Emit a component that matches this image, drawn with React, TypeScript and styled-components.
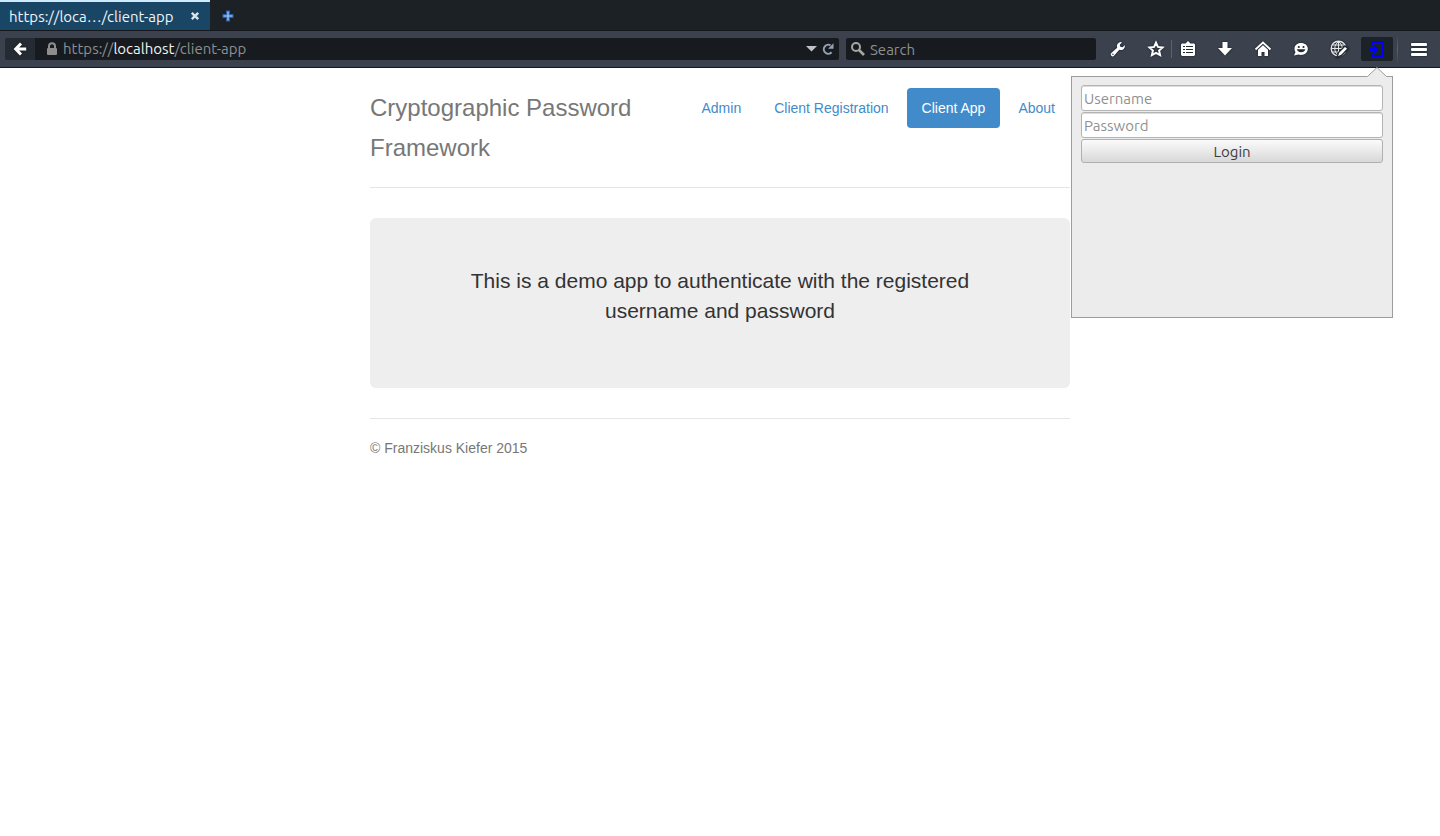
import React from "react";
import styled, { createGlobalStyle, css } from "styled-components";

const uiFont = `Ubuntu, "Noto Sans", "Open Sans", sans-serif`;
const pageFont = `"Liberation Sans", Arial, sans-serif`;

const GlobalStyle = createGlobalStyle`
  *, *::before, *::after { box-sizing: border-box; }
  body { margin: 0; background: #fff; font-family: ${pageFont}; }
  button, input { font: inherit; }
`;

/* ---------- browser chrome ---------- */

const Chrome = styled.header`
  font-family: ${uiFont};
  font-size: 15px;
`;

const TabBar = styled.div`
  display: flex;
  height: 31px;
  background: #1c2126;
  border-bottom: 1px solid #14181d;
`;

const Tab = styled.div`
  display: flex;
  align-items: center;
  justify-content: space-between;
  width: 210px;
  padding: 0 9px;
  border-top: 2px solid #cdeaff;
  background: #1a4666;
  color: #f0f4f7;
`;

const PlainButton = styled.button`
  display: flex;
  align-items: center;
  justify-content: center;
  padding: 0;
  border: 0;
  background: none;
  cursor: pointer;
`;

const TabClose = styled(PlainButton)`
  width: 12px;
  height: 12px;
`;

const NewTab = styled(PlainButton)`
  width: 36px;
  padding-top: 2px;
`;

const NavBar = styled.div`
  display: flex;
  align-items: center;
  height: 37px;
  padding-left: 5px;
  background: #3b424e;
  border-bottom: 1px solid #14181d;
`;

const BackButton = styled(PlainButton)`
  width: 30px;
  height: 22px;
  border-radius: 2px 0 0 2px;
  background: #252b33;
`;

const field = css`
  display: flex;
  align-items: center;
  height: 22px;
  background: #171b1f;
  color: #8d8f91;
`;

const AddressField = styled.div`
  ${field}
  flex: 1;
  min-width: 0;
  padding: 0 5px 0 11px;
  gap: 5px;
  border-radius: 0 2px 2px 0;
`;

const Address = styled.div`
  flex: 1;
  min-width: 0;
  overflow: hidden;
  white-space: nowrap;
  line-height: 22px;
  outline: 0;
`;

const Host = styled.span`
  color: #f3f3f0;
`;

const SearchField = styled.div`
  ${field}
  width: 250px;
  margin: 0 6px 0 7px;
  padding: 0 4px;
  gap: 4px;
  border-radius: 2px;
`;

const SearchInput = styled.input`
  flex: 1;
  min-width: 0;
  height: 22px;
  padding: 0;
  border: 0;
  outline: 0;
  background: none;
  color: #f3f3f0;
  &::placeholder { color: #8d8f91; opacity: 1; }
`;

const Tools = styled.div`
  display: flex;
  align-items: center;
  gap: 6px;
`;

const ToolPair = styled.div`
  display: flex;
  align-items: center;
`;

const ToolButton = styled(PlainButton)<{ $width?: number; $active?: boolean }>`
  width: ${(p) => p.$width ?? 32}px;
  height: 24px;
  border-radius: 2px;
  background: ${(p) => (p.$active ? "#1b2228" : "none")};
`;

const Separator = styled.span<{ $tall?: boolean }>`
  width: 1px;
  height: ${(p) => (p.$tall ? 30 : 18)}px;
  margin-left: ${(p) => (p.$tall ? 4 : 0)}px;
  background: ${(p) =>
    p.$tall ? "linear-gradient(transparent, #5d636e, transparent)" : "#5d636e"};
`;

/* ---------- login panel ---------- */

const PanelAnchor = styled.div`
  position: relative;
`;

const Panel = styled.form`
  position: absolute;
  z-index: 1;
  top: 39px;
  right: 0;
  display: flex;
  flex-direction: column;
  gap: 1px;
  width: 322px;
  height: 242px;
  padding: 8px 9px;
  border: 1px solid #9c9c9c;
  background: #ececec;
`;

const PanelArrow = styled.svg`
  position: absolute;
  top: -10px;
  right: 5px;
`;

const PanelInput = styled.input`
  width: 100%;
  height: 26px;
  padding: 1px 2px 0;
  border: 1px solid #b4b4b4;
  border-radius: 3px;
  background: #fff;
  box-shadow: inset 0 1px 0 #dcdcdc;
  color: #3c3c3c;
  &::placeholder { color: #8f9090; opacity: 1; }
`;

const LoginButton = styled.button`
  height: 24px;
  padding: 2px 0 0;
  border: 1px solid #b0b0b0;
  border-radius: 3px;
  background: linear-gradient(#fbfbfb, #d8d8d8);
  color: #3c3c3c;
  line-height: 20px;
`;

/* ---------- page ---------- */

const Container = styled.div`
  max-width: 700px;
  margin: 0 auto;
  padding-top: 20px;
  color: #333;
  font-size: 14px;
  line-height: 20px;
`;

const PageHeader = styled.div`
  display: flex;
  align-items: flex-start;
  justify-content: space-between;
  margin-bottom: 30px;
  padding-bottom: 19px;
  border-bottom: 1px solid #e5e5e5;
`;

const Title = styled.h3`
  flex: 1;
  margin: 0;
  color: #777;
  font-size: 24px;
  font-weight: 400;
  line-height: 40px;
`;

const Pills = styled.nav`
  display: flex;
  gap: 3px;
`;

const Pill = styled.a<{ $active?: boolean }>`
  padding: 10px 15px;
  border-radius: 4px;
  background: ${(p) => (p.$active ? "#428bca" : "none")};
  color: ${(p) => (p.$active ? "#fff" : "#428bca")};
  text-decoration: none;
  white-space: nowrap;
`;

const Jumbotron = styled.section`
  margin-bottom: 30px;
  padding: 48px 60px 62px;
  border-radius: 6px;
  background: #eee;
  text-align: center;
`;

const Lead = styled.p`
  margin: 0;
  font-size: 21px;
  line-height: 30px;
`;

const Footer = styled.footer`
  padding-top: 19px;
  border-top: 1px solid #e5e5e5;
  color: #777;
`;

/* ---------- icons ---------- */

const Glyph = styled.svg`
  display: block;
  flex: none;
  overflow: visible;
`;

const Shaded = styled(Glyph)`
  filter: drop-shadow(0 0 1px #14181d);
`;

const BackIcon = () => (
  <Shaded width="14" height="14" viewBox="0 0 14 14" fill="none" stroke="#fff" strokeWidth="3">
    <path d="M8 1.500 2.700 7 8 12.500M3 7h10.200" />
  </Shaded>
);

const CloseIcon = () => (
  <Glyph width="8" height="8" viewBox="0 0 8 8" stroke="#d8e2e8" strokeWidth="2.400">
    <path d="m.8.8 6.400 6.400M7.200.8.8 7.200" />
  </Glyph>
);

const PlusIcon = () => (
  <Glyph width="12" height="12" viewBox="0 0 12 12">
    <path d="M4 .5h4V4h3.500v4H8v3.500H4V8H.5V4H4z" fill="#2e5ea8" />
    <path d="M6 1.500v9M1.500 6h9" stroke="#8db9ef" strokeWidth="1.600" />
  </Glyph>
);

const LockIcon = () => (
  <Glyph width="12" height="14" viewBox="0 0 12 14">
    <path d="M3 6.500V4.200a3 3 0 0 1 6 0v2.300" fill="none" stroke="#8e8e8e" strokeWidth="2" />
    <rect x="1" y="6" width="10" height="7" rx="1" fill="#8e8e8e" />
  </Glyph>
);

const DropIcon = () => (
  <Glyph width="11" height="6" viewBox="0 0 11 6" fill="#c0c3c6">
    <path d="M0 0h11L5.500 5.500z" />
  </Glyph>
);

const ReloadIcon = () => (
  <Glyph width="12" height="12" viewBox="0 0 12 12">
    <path d="M9.600 9.300A4.500 4.500 0 1 1 8.500 2.300" fill="none" stroke="#97a3b3" strokeWidth="2" />
    <path d="M11.500.2v5.600H6z" fill="#97a3b3" />
  </Glyph>
);

const SearchIcon = () => (
  <Glyph width="16" height="16" viewBox="0 0 16 16" fill="none" stroke="#a6a6a4">
    <circle cx="6" cy="6" r="4" strokeWidth="2" />
    <path d="m9 9 5 5" strokeWidth="2.600" />
  </Glyph>
);

const WrenchIcon = () => (
  <Shaded width="16" height="16" viewBox="0 0 16 16">
    <path
      d="M10.600 1a4.200 4.200 0 0 0-3.400 5.700L1.300 12a1.900 1.900 0 0 0 2.700 2.700l5.300-5.900a4.200 4.200 0 0 0 5.600-4.500l-2.400 2-2.200-.6-.5-2 2.200-2.500z"
      fill="#fff"
    />
    <circle cx="2.900" cy="13.200" r=".8" fill="#3b424e" />
  </Shaded>
);

const StarIcon = () => (
  <Shaded width="16" height="16" viewBox="0 0 16 16">
    <path
      d="m8 1.700 1.900 4.200 4.600.5-3.400 3.100 1 4.600L8 11.800l-4.100 2.300 1-4.600L1.500 6.400l4.600-.5z"
      fill="none"
      stroke="#fff"
      strokeWidth="2"
    />
  </Shaded>
);

const ClipboardIcon = () => (
  <Shaded width="16" height="16" viewBox="0 0 16 16">
    <path d="M2 2.500h3.500L8 0l2.500 2.500H14l1 1V14l-1 1H2l-1-1V3.500z" fill="#fff" />
    <path d="M3 5.500h2M6 5.500h7M3 8.500h2M6 8.500h7M3 11.500h2M6 11.500h7" stroke="#252b33" strokeWidth="1" />
  </Shaded>
);

const DownloadIcon = () => (
  <Shaded width="16" height="16" viewBox="0 0 16 16" fill="#fff">
    <path d="M5.500 1h5v6H15l-7 7.500L1 7h4.500z" />
  </Shaded>
);

const HomeIcon = () => (
  <Shaded width="16" height="16" viewBox="0 0 16 16">
    <path d="M.5 8.500 8 1.500l7.500 7" fill="none" stroke="#fff" strokeWidth="1.800" />
    <path d="M3 8.800 8 4.200l5 4.600V15H9.500v-4h-3v4H3z" fill="#fff" />
  </Shaded>
);

const SmileIcon = () => (
  <Shaded width="16" height="16" viewBox="0 0 16 16">
    <path d="M8 2C4 2 1.500 4.500 1.500 7.800c0 1.500.3 2.300 1 3.300L1 14.500l4.200-1c.8.300 1.800.5 2.800.5 4 0 6.800-2.700 6.800-6.200S12 2 8 2z" fill="#fff" />
    <circle cx="5.800" cy="6" r="1.100" fill="#252b33" />
    <circle cx="10.500" cy="6" r="1.100" fill="#252b33" />
    <path d="M3.800 8.300h8.600c-.6 2-2.200 3-4.300 3s-3.700-1-4.300-3z" fill="#252b33" />
  </Shaded>
);

const GlobeIcon = () => (
  <Shaded width="18" height="18" viewBox="0 0 18 18">
    <circle cx="8.500" cy="8.500" r="7.300" fill="#30363f" stroke="#e3e5e7" strokeWidth="1.400" />
    <path
      d="M1.500 8.500h14M2.800 5h11.500M2.800 12h11.500M8.500 1.500v14M8.500 1.500c-5 4-5 10 0 14M8.500 1.500c5 4 5 10 0 14"
      fill="none"
      stroke="#e3e5e7"
      strokeWidth="1"
    />
    <path d="m7 17.500 1.500-5L15 6l3 2.800-6.500 6.700z" fill="#fff" stroke="#252b33" strokeWidth="1.400" />
  </Shaded>
);

const EnterIcon = () => (
  <Glyph width="16" height="18" viewBox="0 0 16 18">
    <path d="M3 6V2h11v14H3v-3" fill="none" stroke="#00f" strokeWidth="2" />
    <path d="M0 8h5V5l5 4.500L5 14v-3H0l1-1.500z" fill="#00f" />
  </Glyph>
);

const MenuIcon = () => (
  <Shaded width="16" height="13" viewBox="0 0 16 13" fill="#fff">
    <rect width="16" height="3" rx="1" />
    <rect y="5" width="16" height="3" rx="1" />
    <rect y="10" width="16" height="3" rx="1" />
  </Shaded>
);

/* ---------- composition ---------- */

const links = ["Admin", "Client Registration", "Client App", "About"];

const LoginPanel = () => (
  <Panel onSubmit={(e) => e.preventDefault()}>
    <PanelArrow width="20" height="11" viewBox="0 0 20 11" aria-hidden="true">
      <path d="M0 11 .5 9.500 10 .5l9.500 9L20 11z" fill="#ececec" />
      <path d="M.5 9.500 10 .5l9.500 9" fill="none" stroke="#9c9c9c" />
    </PanelArrow>
    <PanelInput aria-label="Username" type="text" placeholder="Username" />
    <PanelInput aria-label="Password" type="password" placeholder="Password" />
    <LoginButton type="submit">Login</LoginButton>
  </Panel>
);

const BrowserChrome = () => (
  <Chrome>
    <TabBar>
      <Tab>
        <span>https://loca…/client-app</span>
        <TabClose aria-label="Close tab"><CloseIcon /></TabClose>
      </Tab>
      <NewTab aria-label="New tab"><PlusIcon /></NewTab>
    </TabBar>
    <NavBar>
      <BackButton aria-label="Back"><BackIcon /></BackButton>
      <AddressField>
        <LockIcon />
        <Address role="textbox" aria-label="Address" contentEditable suppressContentEditableWarning spellCheck={false}>
          https://<Host>localhost</Host>/client-app
        </Address>
        <PlainButton aria-label="Show history"><DropIcon /></PlainButton>
        <PlainButton aria-label="Reload"><ReloadIcon /></PlainButton>
      </AddressField>
      <SearchField>
        <SearchIcon />
        <SearchInput aria-label="Search" type="text" placeholder="Search" />
      </SearchField>
      <Tools>
        <ToolButton aria-label="Developer tools"><WrenchIcon /></ToolButton>
        <ToolPair>
          <ToolButton $width={31} aria-label="Bookmark this page"><StarIcon /></ToolButton>
          <Separator />
          <ToolButton $width={31} aria-label="Bookmarks"><ClipboardIcon /></ToolButton>
        </ToolPair>
        <ToolButton aria-label="Downloads"><DownloadIcon /></ToolButton>
        <ToolButton aria-label="Home"><HomeIcon /></ToolButton>
        <ToolButton aria-label="Chat"><SmileIcon /></ToolButton>
        <ToolButton aria-label="Site editor"><GlobeIcon /></ToolButton>
        <PanelAnchor>
          <ToolButton $active aria-label="Log in" aria-expanded="true"><EnterIcon /></ToolButton>
          <LoginPanel />
        </PanelAnchor>
      </Tools>
      <Separator $tall />
      <ToolButton $width={42} aria-label="Menu"><MenuIcon /></ToolButton>
    </NavBar>
  </Chrome>
);

export default function App() {
  return (
    <>
      <GlobalStyle />
      <BrowserChrome />
      <Container>
        <PageHeader>
          <Title>Cryptographic Password Framework</Title>
          <Pills>
            {links.map((name) => (
              <Pill key={name} href="#" $active={name === "Client App"}>
                {name}
              </Pill>
            ))}
          </Pills>
        </PageHeader>
        <main>
          <Jumbotron>
            <Lead>This is a demo app to authenticate with the registered username and password</Lead>
          </Jumbotron>
        </main>
        <Footer>© Franziskus Kiefer 2015</Footer>
      </Container>
    </>
  );
}
